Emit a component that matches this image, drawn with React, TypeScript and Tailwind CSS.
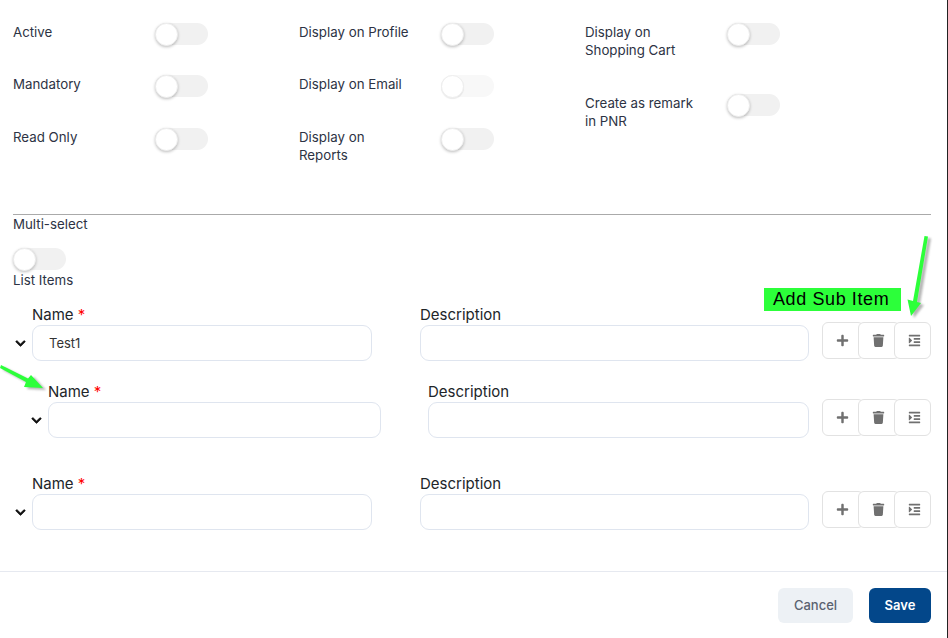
import { FaChevronDown, FaPlus, FaTrash, FaIndent } from 'react-icons/fa';

const Toggle = ({ faded, className }: { faded?: boolean; className?: string }) => (
  <div className={`h-[22px] w-[53px] shrink-0 rounded-full ${faded ? 'bg-[#f8f8f8]' : 'bg-[#f1f1f1]'} ${className ?? ''}`}>
    <div className={`h-[23px] w-[23px] rounded-full border border-[#eeeeee] bg-white ${faded ? 'shadow-[0_1px_1px_rgba(0,0,0,0.08)]' : 'shadow-[0_1px_3px_rgba(0,0,0,0.25)]'}`} />
  </div>
);

const ToggleRow = ({ label, faded, className }: { label: React.ReactNode; faded?: boolean; className?: string }) => (
  <div className={`flex items-start ${className ?? ''}`}>
    <div className="w-[142px] text-[13.3px] leading-[18px] text-[#2d3344]">{label}</div>
    <Toggle faded={faded} />
  </div>
);

const ActionButtons = () => (
  <div className="flex h-[37px] w-[109px] shrink-0 text-[#707070]">
    <div className="flex w-[42px] items-center justify-center rounded-md border border-[#e2e2e2] bg-white pr-[2px]">
      <FaPlus size={13} />
    </div>
    <div className="-ml-[6px] flex w-[42px] items-center justify-center rounded-md border border-[#e2e2e2] bg-white pr-[1px]">
      <FaTrash size={13} />
    </div>
    <div className="-ml-[6px] flex w-[37px] items-center justify-center rounded-md border border-[#e2e2e2] bg-white pl-[3px]">
      <FaIndent size={13} />
    </div>
  </div>
);

const ListItem = ({ value, sub, className }: { value?: string; sub?: boolean; className?: string }) => (
  <div className={`flex items-start ${className ?? ''}`}>
    <div className={`flex shrink-0 ${sub ? 'w-[415px] pl-[16px]' : 'w-[407px]'}`}>
      <div className="w-[19px] shrink-0 pt-[36px]">
        <FaChevronDown size={11} className="ml-[2px] stroke-current stroke-[30] text-[#111111]" />
      </div>
      <div className={sub ? 'w-[333px]' : 'w-[340px]'}>
        <div className="h-[23px] text-[15px] leading-[25px] text-[#212529]">
          Name <span className="text-[#ff0000]">*</span>
        </div>
        <div className="flex h-[36px] items-center rounded-[9px] border border-[#dfe5ef] pl-4 pt-[2px] text-[13px] text-[#333333]">{value}</div>
      </div>
    </div>
    <div className="flex-1">
      <div className="h-[23px] text-[15px] leading-[25px] text-[#212529]">Description</div>
      <div className="h-[36px] rounded-[9px] border border-[#dfe5ef]" />
    </div>
    <div className="ml-[13px] pt-[20px]">
      <ActionButtons />
    </div>
  </div>
);

export default function App() {
  return (
    <div className="relative h-[638px] w-[948px] overflow-hidden bg-white font-['Inter',sans-serif]">
      <div className="flex h-[214px] px-[13px] pt-[23px]">
        <div className="w-[286px]">
          <ToggleRow label="Active" />
          <ToggleRow label="Mandatory" className="mt-[30px]" />
          <ToggleRow label="Read Only" className="mt-[31px]" />
        </div>
        <div className="w-[286px]">
          <ToggleRow label="Display on Profile" />
          <ToggleRow label="Display on Email" faded className="mt-[30px]" />
          <ToggleRow label={<>Display on<br />Reports</>} className="mt-[31px]" />
        </div>
        <div className="w-[286px]">
          <ToggleRow label={<>Display on<br />Shopping Cart</>} />
          <ToggleRow label={<>Create as remark<br />in PNR</>} className="mt-[35px]" />
        </div>
      </div>

      <div className="ml-[13px] mr-[17px] border-t border-[#aaaaaa]" />

      <div className="px-[13px]">
        <div className="text-[13.3px] leading-[18px] text-[#2d3344]">Multi-select</div>
        <Toggle className="mt-[15px]" />
        <div className="mt-px text-[13.3px] leading-[18px] text-[#2d3344]">List Items</div>
      </div>

      <div className="pl-[13px] pr-[17px] pt-[13px]">
        <ListItem value="Test1" />
        <ListItem sub className="mt-[18px]" />
        <ListItem className="mt-[33px]" />
      </div>

      <div className="mt-[41px] flex justify-end gap-4 border-t border-[#e6e9f0] pr-[17px] pt-[16px]">
        <button className="h-[35px] w-[75px] rounded-md bg-[#edf1f5] text-[13px] font-medium text-[#5a6270]">Cancel</button>
        <button className="h-[35px] w-[62px] rounded-md bg-[#03478a] text-[13px] font-semibold text-white">Save</button>
      </div>

      {/* Annotations pasted on the screenshot */}
      <div className="absolute left-[764px] top-[288px] flex h-[23px] w-[137px] items-center bg-[#2cff3a] pl-[9px] font-['Liberation_Sans',sans-serif] text-[18px] tracking-[0.6px] text-black">
        Add Sub Item
      </div>
      <svg className="pointer-events-none absolute left-0 top-0 h-[638px] w-[948px]" viewBox="0 0 948 638">
        <g fill="#777777" opacity="0.55" transform="translate(3 2)" className="blur-[1px]">
          <path d="M924.5 236 L928 236.5 L917 302 L921 303 L911 316 L907.5 299.5 L913 301 Z" />
          <path d="M1 365 L28 378.5 L31 375 L43 388 L24 387 L26 382 L0 368 Z" />
        </g>
        <g fill="#2cff3a">
          <path d="M924.5 236 L928 236.5 L917 302 L921 303 L911 316 L907.5 299.5 L913 301 Z" />
          <path d="M1 365 L28 378.5 L31 375 L43 388 L24 387 L26 382 L0 368 Z" />
        </g>
      </svg>
      <div className="absolute right-0 top-0 h-full w-px bg-[#222222]" />
    </div>
  );
}
